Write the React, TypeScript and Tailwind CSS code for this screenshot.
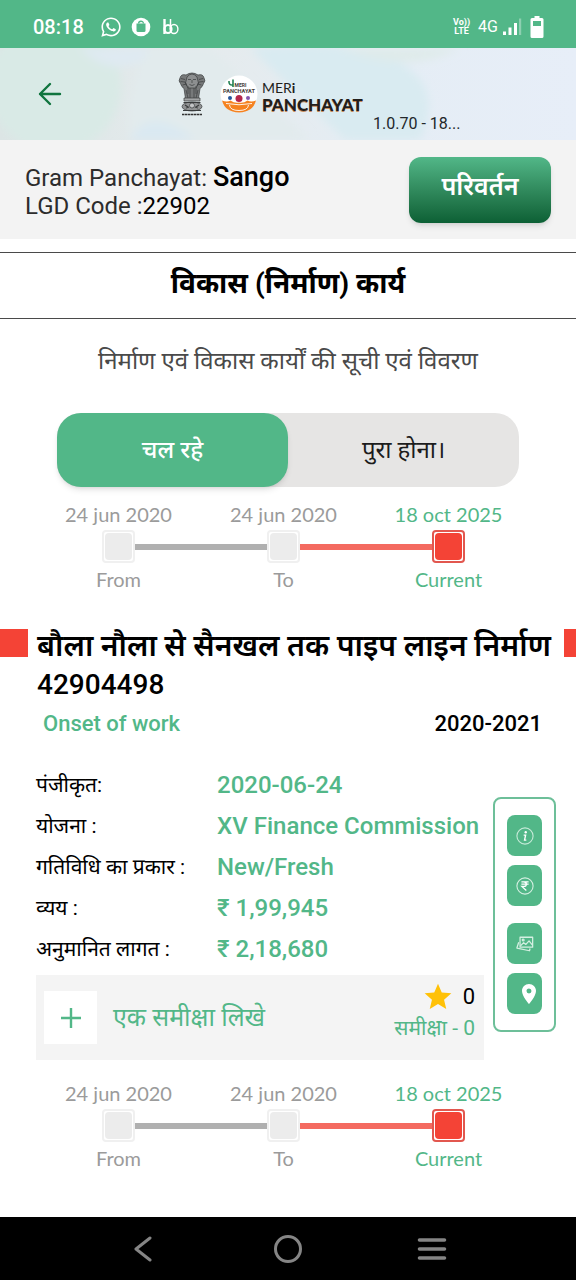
import type { ReactNode } from "react";
import { FaWhatsapp } from "react-icons/fa";
import { MdLocationOn, MdStar } from "react-icons/md";

function StatusBar() {
  return (
    <div className="flex h-12 items-center justify-between bg-[#52b788] pt-[6px] pr-8 pl-[33px] text-white">
      <div className="flex items-center gap-2">
        <span className="mr-2 text-xl leading-6 font-medium">08:18</span>
        <FaWhatsapp className="size-[22px]" />
        <svg viewBox="0 0 20 20" className="ml-px size-5" aria-hidden="true">
          <circle cx="10" cy="10" r="9.3" fill="#fff" />
          <path d="M5.500 6.500h9v7q0 1.500-1.500 1.500H7q-1.500 0-1.500-1.500z" fill="#52b788" />
          <path d="M7.600 6.500C7.600 3.500 12.400 3.500 12.400 6.500" fill="none" stroke="#52b788" strokeWidth="1.300" />
        </svg>
        <svg viewBox="0 0 16 20" className="ml-1 h-5 w-4" fill="none" stroke="#fff" aria-hidden="true">
          <path d="M1.500 2v15" strokeWidth="2.400" />
          <ellipse cx="5" cy="12" rx="3.500" ry="4" strokeWidth="2.200" />
          <path d="M7.500 2v10" strokeWidth="1.500" />
          <ellipse cx="11" cy="12" rx="3.900" ry="4.500" strokeWidth="1.400" />
        </svg>
      </div>
      <div className="flex items-center">
        <div className="flex flex-col items-center text-[9px] leading-[9px] font-bold">
          <span>Vo))</span>
          <span>LTE</span>
        </div>
        <span className="ml-2 text-base leading-5">4G</span>
        <svg viewBox="0 0 20 18" className="ml-1 h-[18px] w-5" fill="#fff" aria-hidden="true">
          <rect x="1" y="13.500" width="3" height="3.500" />
          <rect x="6.500" y="9.500" width="3" height="7.500" />
          <rect x="12" y="5" width="3" height="12" />
          <rect x="17" y="0.500" width="2.200" height="16.500" opacity="0.350" />
        </svg>
        <svg viewBox="0 0 14 22" className="ml-2 h-[22px] w-3.5" aria-hidden="true">
          <path fillRule="evenodd" fill="#fff" d="M4.500 0h5v2H12a1.500 1.500 0 0 1 1.500 1.500v17A1.500 1.500 0 0 1 12 22H2A1.500 1.500 0 0 1 .5 20.500v-17A1.500 1.500 0 0 1 2 2h2.500zM3 5v5h8V5z" />
        </svg>
      </div>
    </div>
  );
}

function Emblem() {
  return (
    <svg viewBox="0 0 28 44" className="h-11 w-7" role="img" aria-label="State Emblem of India">
      <g fill="#77797a" stroke="#3a3c3d" strokeWidth="0.700">
        <path d="M8 3Q3 1.500 2 6q-2 3 .5 5.500Q3.500 15 6 16.500l1.500 10h13l1.500-10q2.500-1.500 3.500-5Q28 9 26 6q-1-4.500-6-3-6-4-12 0z" />
        <path d="M9 5q5-6 10 0l1.500 6-2.500 5h-8l-2.500-5z" fill="#8d8f90" />
        <path d="M3 6.500l4 1M2.500 9.500l4.500.5M4.500 13l4-1M25 6.500l-4 1M25.500 9.500L21 10M23.500 13l-4-1" fill="none" />
        <path d="M10 7.500h3M15 7.500h3M14 8v3M11.500 12.500q2.500 2 5 0M10 14v8M18 14v8M12 16v11M16 16v11M8 18l2 8M20 18l-2 8M7 10l2 4M21 10l-2 4" fill="none" />
        <path d="M6 26h16v3H6z" fill="#a2a4a5" />
        <ellipse cx="14" cy="34.500" rx="10" ry="4.500" fill="#919394" />
        <circle cx="14" cy="33.500" r="2.500" fill="#c3c5c6" />
        <path d="M5.500 30.500h17M5 38.500h18M7 33l3 2M21 33l-3 2M8 36l3-1M20 36l-3-1" fill="none" strokeWidth="1.200" />
      </g>
      <path d="M4 42.500h20" stroke="#333" strokeWidth="1.500" strokeDasharray="2 .5 3 .5" />
    </svg>
  );
}

function PanchayatBadge() {
  return (
    <svg viewBox="0 0 38 38" className="size-[38px]" role="img" aria-label="Meri Panchayat">
      <circle cx="19" cy="19" r="18.500" fill="#fff" />
      <path d="M9 6q-.5 4.500 4 4M13 4.500v7.500" fill="none" stroke="#238052" strokeWidth="1.600" />
      <text x="20.500" y="11.500" textAnchor="middle" fontSize="5" fontWeight="700" fill="#463c38">MERI</text>
      <text x="19" y="18" textAnchor="middle" fontSize="5.600" fontWeight="700" fill="#463c38">PANCHAYAT</text>
      <circle cx="10" cy="23" r="2" fill="#24569b" />
      <circle cx="19" cy="23.500" r="3.500" fill="#b5274b" />
      <circle cx="28" cy="23" r="2" fill="#8357ad" />
      <path d="M2 25.500q5 2 8.500 0 4 3 8.500 2 4.500 1 8.500-2 3.500 2 8.500 0Q33 37 19 37.500 5 37 2 25.500z" fill="#f58220" />
      <path d="M6 28.500q13 2.500 26 0M9.500 30q.5 5.500 9.500 5.500T28.500 30" fill="none" stroke="#fff" strokeWidth="0.900" />
    </svg>
  );
}

function AppHeader() {
  return (
    <header className="relative flex h-[92px] overflow-hidden bg-[#e7eef8]">
      <svg viewBox="0 0 576 92" preserveAspectRatio="none" className="absolute inset-0 size-full" aria-hidden="true">
        <defs>
          <linearGradient id="haze" x1="0" x2="1">
            <stop offset="0" stopColor="#dce5e5" />
            <stop offset="0.350" stopColor="#e5ebed" />
            <stop offset="0.700" stopColor="#e5edf5" />
            <stop offset="1" stopColor="#e7eef8" />
          </linearGradient>
          <filter id="soften" x="-20%" y="-20%" width="140%" height="140%">
            <feGaussianBlur stdDeviation="4" />
          </filter>
        </defs>
        <rect width="576" height="92" fill="url(#haze)" />
        <g filter="url(#soften)">
          <circle cx="55" cy="38" r="66" fill="#d9eae6" />
          <path d="M80 0Q110 30 145 12L155 0z" fill="#dfeaf2" />
          <path d="M150 0h60L310 92H130Q125 40 150 0z" fill="#e2ebed" />
          <path d="M250 0Q355-10 400 15t20 77H345z" fill="#d9ebf1" />
          <path d="M130 92Q150 55 195 92z" fill="#dae9f2" />
          <path d="M340 0Q410 28 460 0z" fill="#dfebea" />
        </g>
      </svg>
      <div className="relative grid w-full grid-cols-[178px_1fr_203px]">
        <button type="button" aria-label="Back" className="flex items-center justify-start pl-[38px] text-[#11753f]">
          <svg viewBox="0 0 24 24" className="size-6" fill="none" stroke="currentColor" strokeWidth="2.400" strokeLinecap="round" strokeLinejoin="round" aria-hidden="true">
            <path d="M22 12H2M12 2L2 12l10 10" />
          </svg>
        </button>
        <div className="flex items-center">
          <Emblem />
          <div className="ml-[14px]"><PanchayatBadge /></div>
          <div className="ml-1 flex flex-col pt-[3px] font-['Lato',sans-serif] whitespace-nowrap text-[#221e1c]">
            <span className="text-sm leading-[17px]">MER<b>i</b></span>
            <span className="text-[17px] leading-[17px] font-black [text-shadow:0_1px_0_#c58b5f]">PANCHAYAT</span>
          </div>
        </div>
        <span className="self-end pb-[6px] text-base leading-5 text-[#22272a]">1.0.70 - 18...</span>
      </div>
    </header>
  );
}

type Step = { date: string; label: string; current?: boolean };

const steps: Step[] = [
  { date: "24 jun 2020", label: "From" },
  { date: "24 jun 2020", label: "To" },
  { date: "18 oct 2025", label: "Current", current: true },
];

function Timeline() {
  return (
    <ol className="mx-9 grid grid-cols-3 pr-[9px] font-['Lato',sans-serif] text-xl leading-6 text-[#9b9b9b]">
      {steps.map((step, i) => (
        <li key={i} className={step.current ? "text-center text-[#52b788]" : "text-center"}>
          <div className="whitespace-nowrap">{step.date}</div>
          <div className="my-1 flex items-center">
            <span className={i === 0 ? "h-1.5 flex-1" : i === 1 ? "h-1.5 flex-1 bg-[#b0b0b0]" : "h-1.5 flex-1 bg-[#f46a60]"} />
            <span className={step.current ? "size-[33px] rounded border-2 border-[#e2574f] p-px" : "size-[33px] rounded border-2 border-[#f0f0f0] p-px"}>
              <span className={step.current ? "block size-full rounded-sm bg-[#f44336]" : "block size-full rounded-sm bg-[#ececec]"} />
            </span>
            <span className={i === 0 ? "h-1.5 flex-1 bg-[#b0b0b0]" : i === 1 ? "h-1.5 flex-1 bg-[#f46a60]" : "h-1.5 flex-1"} />
          </div>
          <div>{step.label}</div>
        </li>
      ))}
    </ol>
  );
}

const details: [string, string][] = [
  ["पंजीकृत:", "2020-06-24"],
  ["योजना :", "XV Finance Commission"],
  ["गतिविधि का प्रकार :", "New/Fresh"],
  ["व्यय :", "₹ 1,99,945"],
  ["अनुमानित लागत :", "₹ 2,18,680"],
];

function ActionButton({ label, children }: { label: string; children: ReactNode }) {
  return (
    <button type="button" aria-label={label} className="flex h-[41px] w-[35px] items-center justify-center rounded-lg bg-[#52b788] text-white">
      {children}
    </button>
  );
}

function Actions() {
  return (
    <aside className="mt-[33px] mr-5 ml-[9px] flex w-[63px] shrink-0 flex-col items-center gap-[9px] self-start rounded-lg border-2 border-[#6dbf99] py-4">
      <ActionButton label="Information">
        <svg viewBox="0 0 20 20" className="size-[18px]" fill="none" stroke="#c7ead9" aria-hidden="true">
          <circle cx="10" cy="10" r="9" strokeWidth="1.200" />
          <circle cx="10.800" cy="5.800" r="1.300" fill="#fff" stroke="none" />
          <path d="M8.500 9h2.200l-1.200 5.500h2" stroke="#fff" strokeWidth="1.500" />
        </svg>
      </ActionButton>
      <ActionButton label="Expenditure">
        <svg viewBox="0 0 20 20" className="size-[18px]" fill="none" stroke="#d5efe2" aria-hidden="true">
          <circle cx="10" cy="10" r="9" strokeWidth="1.200" />
          <path d="M6 5.500h8M6 8h8M6 5.500h2.500c4 0 4 5 0 5H6.500l5 4.500" stroke="#fff" strokeWidth="1.400" />
        </svg>
      </ActionButton>
      <div className="mt-2">
        <ActionButton label="Photos">
          <svg viewBox="0 0 20 20" className="size-[18px]" fill="none" stroke="#d5efe2" strokeWidth="1.400" strokeLinejoin="round" aria-hidden="true">
            <path d="M4.500 2.500h14v11h-14z" />
            <path d="M5 12l3.500-3.500 2.500 2 3.500-4 4 5" />
            <circle cx="8" cy="5.500" r="1" />
            <path d="M3 8L1 14.500l14 3 .6-2.500" />
          </svg>
        </ActionButton>
      </div>
      <ActionButton label="Location">
        <MdLocationOn className="ml-2 size-6" />
      </ActionButton>
    </aside>
  );
}

function WorkCard() {
  return (
    <article className="mt-[35px]">
      <div className="flex items-start">
        <span className="mt-[3px] h-7 w-7 shrink-0 bg-[#f44336]" />
        <h2 className="min-w-0 flex-1 pl-[9px] text-[28px] leading-[39px] font-medium text-black">
          <span className="block whitespace-nowrap text-[30px] font-semibold">बौला नौला से सैनखल तक पाइप लाइन निर्माण</span>
          <span className="block">42904498</span>
        </h2>
        <span className="mt-[3px] h-7 w-3 shrink-0 bg-[#f44336]" />
      </div>
      <div className="mt-1 flex items-center justify-between pr-[34px] pl-[43px] text-[22px] leading-8 font-medium">
        <span className="text-[#52b788]">Onset of work</span>
        <span className="text-black">2020-2021</span>
      </div>
      <div className="mt-6 flex justify-between">
        <div className="min-w-0 flex-1 pl-9">
          <dl>
            {details.map(([label, value]) => (
              <div key={label} className="grid h-[41px] grid-cols-[181px_1fr] items-center">
                <dt className="whitespace-nowrap text-[21px] leading-7 text-black">{label}</dt>
                <dd className="whitespace-nowrap text-2xl leading-8 font-medium text-[#52b788]">{value}</dd>
              </div>
            ))}
          </dl>
          <div className="mt-[6px] flex h-[85px] items-center justify-between bg-[#f4f4f4] pr-[9px] pl-2">
            <button type="button" className="flex items-center gap-4 text-[25px] leading-8 text-[#52b788]">
              <span className="flex size-[53px] items-center justify-center bg-white">
                <svg viewBox="0 0 20 20" className="size-5" stroke="currentColor" strokeWidth="2.400" aria-hidden="true">
                  <path d="M10 0v20M0 10h20" />
                </svg>
              </span>
              <span className="whitespace-nowrap">एक समीक्षा लिखे</span>
            </button>
            <div className="flex flex-col items-end pb-3">
              <div className="flex items-center gap-[9px] text-[22px] leading-8 text-black">
                <MdStar className="size-8 text-[#ffc107]" />
                <span>0</span>
              </div>
              <div className="whitespace-nowrap text-[21px] leading-[30px] text-[#52b788]">समीक्षा - 0</div>
            </div>
          </div>
        </div>
        <Actions />
      </div>
    </article>
  );
}

function NavBar() {
  return (
    <nav className="mt-auto grid h-[63px] grid-cols-4 items-center bg-black text-[#858585]">
      <button type="button" aria-label="Back" className="col-start-1 flex translate-x-1/2 justify-center">
        <svg viewBox="0 0 20 28" className="h-7 w-5" fill="none" stroke="currentColor" strokeWidth="3" strokeLinecap="round" strokeLinejoin="round" aria-hidden="true">
          <path d="M16 3L2 14l14 11" />
        </svg>
      </button>
      <button type="button" aria-label="Home" className="col-span-2 flex justify-center">
        <svg viewBox="0 0 28 28" className="size-7" fill="none" stroke="currentColor" strokeWidth="3" aria-hidden="true">
          <circle cx="14" cy="14" r="12.500" />
        </svg>
      </button>
      <button type="button" aria-label="Recent apps" className="flex -translate-x-1/2 justify-center">
        <svg viewBox="0 0 30 24" className="h-6 w-[30px]" stroke="currentColor" strokeWidth="3.600" strokeLinecap="round" aria-hidden="true">
          <path d="M2.500 3h25M2.500 12h25M2.500 21h25" />
        </svg>
      </button>
    </nav>
  );
}

export default function App() {
  return (
    <div className="flex min-h-screen flex-col bg-white font-['Roboto','Noto_Sans',sans-serif]">
      <StatusBar />
      <AppHeader />
      <section className="flex items-start justify-between bg-[#f3f3f3] px-[25px] pt-[17px] pb-4">
        <div className="pt-[6px] text-2xl leading-7 text-[#2c2c2c]">
          <p>Gram Panchayat: <span className="text-[27px] font-medium text-black">Sango</span></p>
          <p>LGD Code :<span className="text-black">22902</span></p>
        </div>
        <button type="button" className="h-[66px] w-[142px] rounded-xl bg-linear-to-b from-[#52b788] to-[#0c6035] pb-[6px] text-[25px] leading-8 font-semibold text-white shadow-md">
          परिवर्तन
        </button>
      </section>
      <main className="pt-[13px]">
        <h1 className="flex h-[67px] items-center justify-center border-y border-[#4a4a4a] pb-1 text-[28px] leading-9 font-bold text-black">
          विकास (निर्माण) कार्य
        </h1>
        <p className="mt-6 text-center text-2xl leading-9 text-[#4a4a4a]">निर्माण एवं विकास कार्यों की सूची एवं विवरण</p>
        <div className="mx-[57px] mt-[34px] flex h-[74px] rounded-3xl bg-[#e6e5e4] text-2xl leading-8">
          <button type="button" aria-pressed="true" className="flex-1 rounded-3xl bg-[#52b788] font-medium text-white shadow-md">चल रहे</button>
          <button type="button" aria-pressed="false" className="flex-1 text-[#1c1c1c]">पुरा होना।</button>
        </div>
        <div className="mt-[15px]"><Timeline /></div>
        <WorkCard />
        <div className="mt-[21px] pb-8"><Timeline /></div>
      </main>
      <NavBar />
    </div>
  );
}
